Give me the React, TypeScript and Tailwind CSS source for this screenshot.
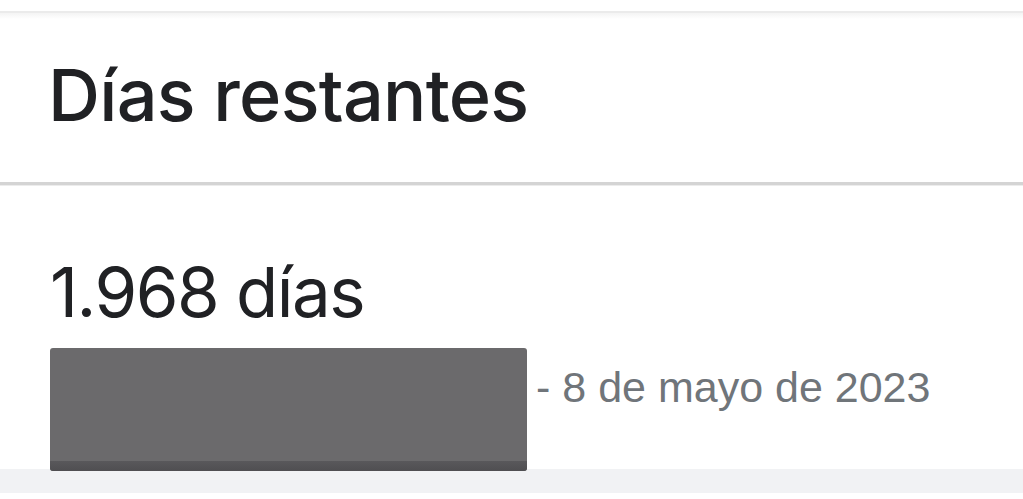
export default function App() {
  return (
    <div className="flex h-[499px] w-full flex-col overflow-hidden bg-white font-['Inter',sans-serif] text-[#202124]">
      {/* top edge */}
      <div className="h-[11px] shrink-0 bg-white" />
      <div className="h-[2px] shrink-0 bg-[#ebebeb]" />
      <div className="h-[6px] shrink-0 bg-gradient-to-b from-[#f4f4f4] to-white" />

      {/* header */}
      <div className="flex h-[163px] shrink-0 items-center pb-[12px] pl-[48px]">
        <h1 className="text-[72px] leading-none font-medium tracking-[-0.01em]">Días restantes</h1>
      </div>
      <div className="h-[3px] shrink-0 bg-[#d4d4d4]" />
      <div className="h-px shrink-0 bg-[#ececec]" />

      {/* body */}
      <div className="flex min-h-0 flex-1 flex-col pl-[50px]">
        <p className="mt-[72px] text-[69px] leading-none font-normal tracking-[-0.022em]">1.968 días</p>
        <div className="mt-[21px] flex items-start">
          <div className="relative z-10 flex h-[123px] w-[477px] shrink-0 flex-col overflow-hidden rounded-[3px] bg-[#6b6a6c]">
            <div className="flex-1" />
            <div className="h-[10px] bg-gradient-to-b from-[#59585b] to-[#4f4e51]" />
          </div>
          <span className="mt-[18px] ml-[9px] font-['Liberation_Sans',Arial,sans-serif] text-[43px] leading-none text-[#70757a]">
            - 8 de mayo de 2023
          </span>
        </div>
      </div>

      {/* footer band */}
      <div className="h-[24px] shrink-0 bg-[#f1f2f4]" />
      <div className="h-[6px] shrink-0 bg-white" />
    </div>
  )
}
